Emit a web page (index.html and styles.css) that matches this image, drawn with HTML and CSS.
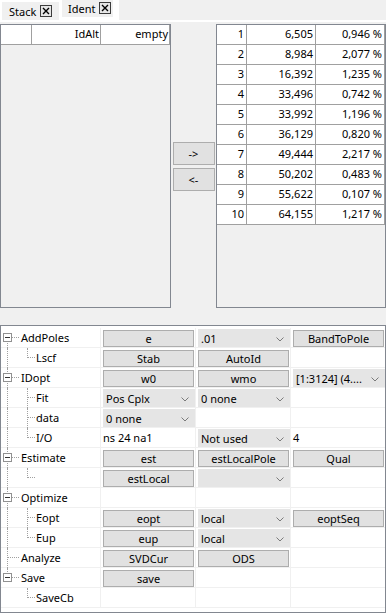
FILE: index.html
```html
<!DOCTYPE html>
<html lang="en">
<head>
  <meta charset="UTF-8">
  <meta name="viewport" content="width=device-width, initial-scale=1.0">
  <title>Ident</title>
  <link rel="stylesheet" href="styles.css">
</head>
<body>
  <div class="tabbar">
    <div class="tabs">
      <div class="tab">Stack <svg class="close" width="12" height="12" viewBox="0 0 12 12"><rect x="0.5" y="0.5" width="11" height="11" fill="#e6e6e6" stroke="#3c3c3c"/><path d="M3 3l6 6M9 3l-6 6" stroke="#000" stroke-width="1.4"/></svg></div>
      <div class="tab active">Ident <svg class="close" width="12" height="12" viewBox="0 0 12 12"><rect x="0.5" y="0.5" width="11" height="11" fill="#e6e6e6" stroke="#3c3c3c"/><path d="M3 3l6 6M9 3l-6 6" stroke="#000" stroke-width="1.4"/></svg></div>
    </div>
  </div>

  <div class="top">
    <div class="panel left">
      <div class="hdr">
        <span class="c1"></span>
        <span class="c2">IdAlt</span>
        <span class="c3">empty</span>
      </div>
    </div>

    <div class="mover">
      <button class="btn">-&gt;</button>
      <button class="btn">&lt;-</button>
    </div>

    <div class="panel right">
      <div class="rrow"><span class="n">1</span><span class="f">6,505</span><span class="d">0,946 %</span></div>
      <div class="rrow"><span class="n">2</span><span class="f">8,984</span><span class="d">2,077 %</span></div>
      <div class="rrow"><span class="n">3</span><span class="f">16,392</span><span class="d">1,235 %</span></div>
      <div class="rrow"><span class="n">4</span><span class="f">33,496</span><span class="d">0,742 %</span></div>
      <div class="rrow"><span class="n">5</span><span class="f">33,992</span><span class="d">1,196 %</span></div>
      <div class="rrow"><span class="n">6</span><span class="f">36,129</span><span class="d">0,820 %</span></div>
      <div class="rrow"><span class="n">7</span><span class="f">49,444</span><span class="d">2,217 %</span></div>
      <div class="rrow"><span class="n">8</span><span class="f">50,202</span><span class="d">0,483 %</span></div>
      <div class="rrow"><span class="n">9</span><span class="f">55,622</span><span class="d">0,107 %</span></div>
      <div class="rrow"><span class="n">10</span><span class="f">64,155</span><span class="d">1,217 %</span></div>
    </div>
  </div>

  <div class="tree">
    <!-- AddPoles -->
    <div class="row">
      <div class="lab"><span class="g vb h"><i class="exp"></i></span>AddPoles</div>
      <div class="cell"><button class="btn">e</button></div>
      <div class="cell"><div class="dd">.01<svg class="chev" width="8" height="5" viewBox="0 0 8 5"><path d="M0.5 0.5L4 4L7.5 0.5" fill="none" stroke="#7a7a7a"/></svg></div></div>
      <div class="cell last"><button class="btn">BandToPole</button></div>
    </div>
    <div class="row">
      <div class="lab"><span class="g v"></span><span class="g2 vt h"></span>Lscf</div>
      <div class="cell"><button class="btn">Stab</button></div>
      <div class="cell"><button class="btn">AutoId</button></div>
      <div class="cell last"></div>
    </div>

    <!-- IDopt -->
    <div class="row">
      <div class="lab"><span class="g v h"><i class="exp"></i></span>IDopt</div>
      <div class="cell"><button class="btn">w0</button></div>
      <div class="cell"><button class="btn">wmo</button></div>
      <div class="cell last"><div class="dd">[1:3124] (4....<svg class="chev" width="8" height="5" viewBox="0 0 8 5"><path d="M0.5 0.5L4 4L7.5 0.5" fill="none" stroke="#7a7a7a"/></svg></div></div>
    </div>
    <div class="row">
      <div class="lab"><span class="g v"></span><span class="g2 v h"></span>Fit</div>
      <div class="cell"><div class="dd">Pos Cplx<svg class="chev" width="8" height="5" viewBox="0 0 8 5"><path d="M0.5 0.5L4 4L7.5 0.5" fill="none" stroke="#7a7a7a"/></svg></div></div>
      <div class="cell"><div class="dd">0 none<svg class="chev" width="8" height="5" viewBox="0 0 8 5"><path d="M0.5 0.5L4 4L7.5 0.5" fill="none" stroke="#7a7a7a"/></svg></div></div>
      <div class="cell last"></div>
    </div>
    <div class="row">
      <div class="lab"><span class="g v"></span><span class="g2 v h"></span>data</div>
      <div class="cell"><div class="dd">0 none<svg class="chev" width="8" height="5" viewBox="0 0 8 5"><path d="M0.5 0.5L4 4L7.5 0.5" fill="none" stroke="#7a7a7a"/></svg></div></div>
      <div class="cell"></div>
      <div class="cell last"></div>
    </div>
    <div class="row">
      <div class="lab"><span class="g v"></span><span class="g2 vt h"></span>I/O</div>
      <div class="cell txt">ns 24 na1</div>
      <div class="cell"><div class="dd">Not used<svg class="chev" width="8" height="5" viewBox="0 0 8 5"><path d="M0.5 0.5L4 4L7.5 0.5" fill="none" stroke="#7a7a7a"/></svg></div></div>
      <div class="cell last txt">4</div>
    </div>

    <!-- Estimate -->
    <div class="row">
      <div class="lab"><span class="g v h"><i class="exp"></i></span>Estimate</div>
      <div class="cell"><button class="btn">est</button></div>
      <div class="cell"><button class="btn">estLocalPole</button></div>
      <div class="cell last"><button class="btn">Qual</button></div>
    </div>
    <div class="row">
      <div class="lab"><span class="g v"></span><span class="g2 vt h"></span></div>
      <div class="cell"><button class="btn">estLocal</button></div>
      <div class="cell"><div class="dd"><svg class="chev" width="8" height="5" viewBox="0 0 8 5"><path d="M0.5 0.5L4 4L7.5 0.5" fill="none" stroke="#7a7a7a"/></svg></div></div>
      <div class="cell last"></div>
    </div>

    <!-- Optimize -->
    <div class="row">
      <div class="lab"><span class="g v h"><i class="exp"></i></span>Optimize</div>
      <div class="cell"></div>
      <div class="cell"></div>
      <div class="cell last"></div>
    </div>
    <div class="row">
      <div class="lab"><span class="g v"></span><span class="g2 v h"></span>Eopt</div>
      <div class="cell"><button class="btn">eopt</button></div>
      <div class="cell"><div class="dd">local<svg class="chev" width="8" height="5" viewBox="0 0 8 5"><path d="M0.5 0.5L4 4L7.5 0.5" fill="none" stroke="#7a7a7a"/></svg></div></div>
      <div class="cell last"><button class="btn">eoptSeq</button></div>
    </div>
    <div class="row">
      <div class="lab"><span class="g v"></span><span class="g2 vt h"></span>Eup</div>
      <div class="cell"><button class="btn">eup</button></div>
      <div class="cell"><div class="dd">local<svg class="chev" width="8" height="5" viewBox="0 0 8 5"><path d="M0.5 0.5L4 4L7.5 0.5" fill="none" stroke="#7a7a7a"/></svg></div></div>
      <div class="cell last"></div>
    </div>

    <!-- Analyze -->
    <div class="row">
      <div class="lab"><span class="g v h"></span>Analyze</div>
      <div class="cell"><button class="btn">SVDCur</button></div>
      <div class="cell"><button class="btn">ODS</button></div>
      <div class="cell last"></div>
    </div>

    <!-- Save -->
    <div class="row">
      <div class="lab"><span class="g vt h"><i class="exp"></i></span>Save</div>
      <div class="cell"><button class="btn">save</button></div>
      <div class="cell"></div>
      <div class="cell last"></div>
    </div>
    <div class="row">
      <div class="lab"><span class="g"></span><span class="g2 vt h"></span>SaveCb</div>
      <div class="cell"></div>
      <div class="cell"></div>
      <div class="cell last"></div>
    </div>
  </div>
</body>
</html>
```

FILE: styles.css
```css
body {
  margin: 0;
  width: 386px;
  height: 613px;
  background-color: #f0f0f0;
  font-family: "Noto Sans", "Liberation Sans", sans-serif;
  font-size: 11px;
  color: #000;
  overflow: hidden;
}

/* tabs */
.tabbar {
  height: 20px;
  border-bottom: 2px solid #fff;
  margin-bottom: 2px;
}
.tabs {
  display: flex;
  width: 119px;
  height: 20px;
  background-color: #fff;
}
.tab {
  display: flex;
  align-items: center;
  gap: 4px;
  margin: 2px 0 0 2px;
  padding-left: 7px;
  width: 57px;
  height: 18px;
  box-sizing: border-box;
  background-color: #f0f0f0;
}
.tab.active {
  margin: 0 0 0 3px;
  width: 51px;
  height: 17px;
  padding-left: 6px;
  padding-bottom: 1px;
}
.close {
  display: block;
  flex: none;
}

/* top lists */
.top {
  display: flex;
  height: 284px;
}
.panel {
  box-sizing: border-box;
  border: 1px solid #828790;
  height: 284px;
  background-color: #f0f0f0;
}
.panel.left {
  width: 171px;
}
.panel.right {
  width: 170px;
}
.hdr {
  display: flex;
  height: 20px;
  background-color: #fff;
  border-bottom: 1px solid #a0a0a0;
  box-sizing: border-box;
}
.hdr span {
  box-sizing: border-box;
  border-right: 1px solid #a0a0a0;
  text-align: right;
  padding-right: 1px;
  line-height: 18px;
}
.hdr .c1 { width: 31px; }
.hdr .c2 { width: 69px; }
.hdr .c3 { width: 69px; }

.mover {
  width: 45px;
  display: flex;
  flex-direction: column;
  justify-content: center;
  align-items: center;
  gap: 3px;
}
.mover .btn {
  width: 42px;
  height: 23px;
}

.rrow {
  display: flex;
  height: 20px;
  box-sizing: border-box;
  background-color: #fff;
  border-bottom: 1px solid #a0a0a0;
}
.rrow span {
  box-sizing: border-box;
  border-right: 1px solid #a0a0a0;
  text-align: right;
  padding-right: 2px;
  line-height: 18px;
}
.rrow .n { width: 30px; }
.rrow .f { width: 69px; }
.rrow .d { width: 69px; }

/* controls */
.btn {
  display: block;
  box-sizing: border-box;
  margin: 0;
  padding: 0;
  font-family: inherit;
  font-size: 11px;
  color: #000;
  background-color: #e1e1e1;
  border: 1px solid #adadad;
  text-align: center;
  line-height: 15px;
}
.cell .btn {
  width: 91px;
  height: 17px;
  margin: 2px 0 0 2px;
}
.dd {
  display: flex;
  justify-content: space-between;
  align-items: center;
  box-sizing: border-box;
  width: 92px;
  height: 18px;
  margin: 1px 0 0 2px;
  padding: 0 6px 0 3px;
  background-color: #e5e5e5;
}
.chev {
  display: block;
  margin-top: 3px;
  margin-left: auto;
}

/* property tree */
.tree {
  margin-top: 17px;
  border: 1px solid #828790;
  height: 288px;
  box-sizing: border-box;
  padding-top: 2px;
  background-color: #fff;
}
.row {
  display: flex;
  height: 20px;
}
.lab, .cell {
  box-sizing: border-box;
  height: 20px;
  border-right: 1px solid #f0f0f0;
  border-bottom: 1px solid #f0f0f0;
}
.lab {
  width: 100px;
  display: flex;
  align-items: center;
  white-space: nowrap;
  line-height: 19px;
}
.cell {
  width: 95px;
}
.cell.last {
  width: 94px;
  border-right: none;
}
.cell.txt {
  padding-left: 2px;
  line-height: 19px;
}

.g, .g2 {
  position: relative;
  flex: none;
  align-self: stretch;
  height: 20px;
}
.g { width: 20px; }
.g2 { width: 15px; }
.v::before, .vt::before, .vb::before {
  content: '';
  position: absolute;
  left: 6px;
  top: 0;
  bottom: 0;
  border-left: 1px dotted #a0a0a0;
}
.vt::before { bottom: 10px; }
.vb::before { top: 10px; }
.h::after {
  content: '';
  position: absolute;
  left: 7px;
  width: 11px;
  top: 9px;
  border-top: 1px dotted #a0a0a0;
}
.g2.h::after { width: 7px; }
.exp {
  position: absolute;
  z-index: 1;
  left: 2px;
  top: 5px;
  width: 9px;
  height: 9px;
  box-sizing: border-box;
  border: 1px solid #919191;
  background-color: #fff;
}
.exp::after {
  content: '';
  position: absolute;
  left: 1px;
  right: 1px;
  top: 3px;
  height: 1px;
  background-color: #333;
}
```
